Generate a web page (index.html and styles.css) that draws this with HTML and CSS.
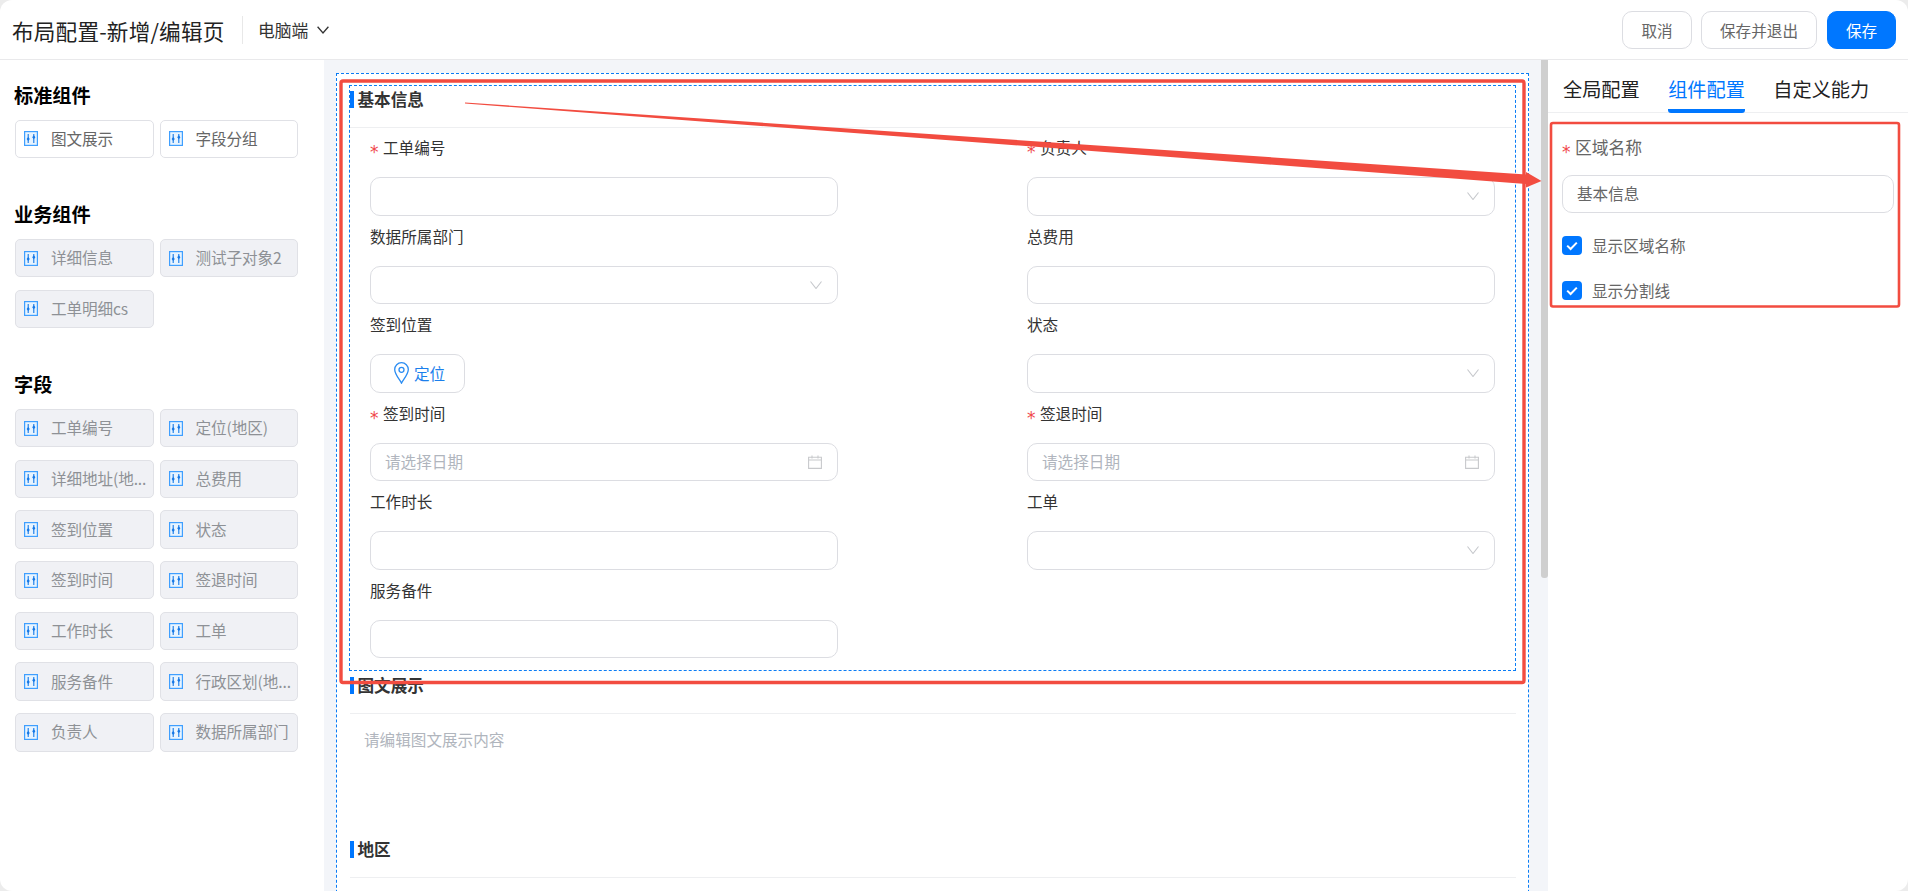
FILE: index.html
```html
<!DOCTYPE html>
<html lang="zh-CN">
<head>
<meta charset="utf-8">
<title>布局配置-新增/编辑页</title>
<link rel="stylesheet" href="styles.css">
</head>
<body>
<svg class="defs" width="0" height="0" aria-hidden="true">
  <symbol id="i-slider" viewBox="0 0 14 15">
    <rect x=".6" y=".6" width="12.8" height="13.8" fill="#e8f4ff" stroke="#3f9fff" stroke-width="1.2"/>
    <path d="M4.2 3v9M9.8 3v9" stroke="#1578e6" stroke-width="1.1" fill="none"/>
    <path d="M4.2 6l1.6 2-1.6 2-1.6-2zM9.8 4.2l1.6 2-1.6 2-1.6-2z" fill="#1578e6"/>
  </symbol>
  <symbol id="i-chev" viewBox="0 0 12 8">
    <path d="M.5.5 6 7.5 11.5.5" fill="none" stroke="#c6c8cc" stroke-width="1.1"/>
  </symbol>
  <symbol id="i-cal" viewBox="0 0 14 14">
    <path d="M.6 2.2h12.8v11.2H.6zM.6 5h12.8M4 .4v3M10 .4v3" fill="none" stroke="#c8c9cc" stroke-width="1.1"/>
  </symbol>
  <symbol id="i-check" viewBox="0 0 20 19">
    <rect width="20" height="19" rx="4" fill="#0077ff"/>
    <path d="M5.2 9.6 8.6 13l6.2-6.4" fill="none" stroke="#fff" stroke-width="2"/>
  </symbol>
</svg>

<div class="app">
  <header class="topbar">
    <h1 class="page-title">布局配置-新增/编辑页</h1>
    <div class="device">
      <span>电脑端</span>
      <svg class="device-chev" viewBox="0 0 12 8"><path d="M.6.8 6 7 11.4.8" fill="none" stroke="#333" stroke-width="1.3"/></svg>
    </div>
    <div class="actions">
      <button class="btn btn-cancel">取消</button>
      <button class="btn btn-exit">保存并退出</button>
      <button class="btn btn-primary">保存</button>
    </div>
  </header>

  <div class="main">
    <aside class="palette">
      <section class="group">
        <h2 class="group-title">标准组件</h2>
        <div class="items">
          <div class="item item-free"><svg class="item-icon"><use href="#i-slider"/></svg><span class="item-text">图文展示</span></div>
          <div class="item item-free"><svg class="item-icon"><use href="#i-slider"/></svg><span class="item-text">字段分组</span></div>
        </div>
      </section>
      <section class="group">
        <h2 class="group-title">业务组件</h2>
        <div class="items">
          <div class="item"><svg class="item-icon"><use href="#i-slider"/></svg><span class="item-text">详细信息</span></div>
          <div class="item"><svg class="item-icon"><use href="#i-slider"/></svg><span class="item-text">测试子对象2</span></div>
          <div class="item"><svg class="item-icon"><use href="#i-slider"/></svg><span class="item-text">工单明细cs</span></div>
        </div>
      </section>
      <section class="group">
        <h2 class="group-title">字段</h2>
        <div class="items">
          <div class="item"><svg class="item-icon"><use href="#i-slider"/></svg><span class="item-text">工单编号</span></div>
          <div class="item"><svg class="item-icon"><use href="#i-slider"/></svg><span class="item-text">定位(地区)</span></div>
          <div class="item"><svg class="item-icon"><use href="#i-slider"/></svg><span class="item-text">详细地址(地...</span></div>
          <div class="item"><svg class="item-icon"><use href="#i-slider"/></svg><span class="item-text">总费用</span></div>
          <div class="item"><svg class="item-icon"><use href="#i-slider"/></svg><span class="item-text">签到位置</span></div>
          <div class="item"><svg class="item-icon"><use href="#i-slider"/></svg><span class="item-text">状态</span></div>
          <div class="item"><svg class="item-icon"><use href="#i-slider"/></svg><span class="item-text">签到时间</span></div>
          <div class="item"><svg class="item-icon"><use href="#i-slider"/></svg><span class="item-text">签退时间</span></div>
          <div class="item"><svg class="item-icon"><use href="#i-slider"/></svg><span class="item-text">工作时长</span></div>
          <div class="item"><svg class="item-icon"><use href="#i-slider"/></svg><span class="item-text">工单</span></div>
          <div class="item"><svg class="item-icon"><use href="#i-slider"/></svg><span class="item-text">服务备件</span></div>
          <div class="item"><svg class="item-icon"><use href="#i-slider"/></svg><span class="item-text">行政区划(地...</span></div>
          <div class="item"><svg class="item-icon"><use href="#i-slider"/></svg><span class="item-text">负责人</span></div>
          <div class="item"><svg class="item-icon"><use href="#i-slider"/></svg><span class="item-text">数据所属部门</span></div>
        </div>
      </section>
    </aside>

    <main class="canvas">
      <div class="canvas-scroll">
        <div class="board">
          <section class="block block-selected">
            <div class="block-head"><span class="block-title">基本信息</span></div>
            <div class="fields">
              <div class="field"><div class="field-label"><i class="req">*</i>工单编号</div><div class="control"></div></div>
              <div class="field"><div class="field-label"><i class="req">*</i>负责人</div><div class="control"><svg class="chev"><use href="#i-chev"/></svg></div></div>
              <div class="field"><div class="field-label">数据所属部门</div><div class="control"><svg class="chev"><use href="#i-chev"/></svg></div></div>
              <div class="field"><div class="field-label">总费用</div><div class="control"></div></div>
              <div class="field"><div class="field-label">签到位置</div>
                <div class="locate">
                  <svg class="pin" viewBox="0 0 15 22"><path d="M7.5.7C3.7.7.7 3.7.7 7.5c0 4.6 4.6 9.6 6.8 13.6 2.2-4 6.8-9 6.8-13.6C14.3 3.7 11.3.7 7.5.7z" fill="none" stroke="#2b8df2" stroke-width="1.3"/><circle cx="7.5" cy="7.8" r="2.5" fill="none" stroke="#2b8df2" stroke-width="1.3"/></svg>
                  <span>定位</span>
                </div>
              </div>
              <div class="field"><div class="field-label">状态</div><div class="control"><svg class="chev"><use href="#i-chev"/></svg></div></div>
              <div class="field"><div class="field-label"><i class="req">*</i>签到时间</div><div class="control"><span class="ph">请选择日期</span><svg class="cal"><use href="#i-cal"/></svg></div></div>
              <div class="field"><div class="field-label"><i class="req">*</i>签退时间</div><div class="control"><span class="ph">请选择日期</span><svg class="cal"><use href="#i-cal"/></svg></div></div>
              <div class="field"><div class="field-label">工作时长</div><div class="control"></div></div>
              <div class="field"><div class="field-label">工单</div><div class="control"><svg class="chev"><use href="#i-chev"/></svg></div></div>
              <div class="field"><div class="field-label">服务备件</div><div class="control"></div></div>
            </div>
          </section>
          <section class="block">
            <div class="block-head"><span class="block-title">图文展示</span></div>
            <div class="rich">请编辑图文展示内容</div>
          </section>
          <section class="block">
            <div class="block-head"><span class="block-title">地区</span></div>
          </section>
        </div>
      </div>
      <div class="scrollbar"><div class="thumb"></div></div>
    </main>

    <aside class="config">
      <nav class="tabs">
        <span class="tab">全局配置</span>
        <span class="tab tab-active">组件配置</span>
        <span class="tab">自定义能力</span>
      </nav>
      <div class="config-body">
        <div class="config-label"><i class="req">*</i>区域名称</div>
        <div class="config-input">基本信息</div>
        <label class="check"><svg class="check-box"><use href="#i-check"/></svg>显示区域名称</label>
        <label class="check"><svg class="check-box"><use href="#i-check"/></svg>显示分割线</label>
      </div>
    </aside>
  </div>

  <svg class="marks" viewBox="0 0 1908 891" aria-hidden="true">
    <rect class="mark-box" x="341" y="81" width="1183" height="601.5" rx="2"/>
    <rect class="mark-box-thin" x="1551" y="123" width="348" height="183.5" rx="2"/>
    <polygon class="mark-arrow" points="465,102.5 1526,174.5 1526,172 1541.5,181 1526,187.5 1526,184 465,103.5"/>
  </svg>
</div>
</body>
</html>
```
FILE: styles.css
```css
* { box-sizing: border-box; }
html, body { margin: 0; height: 100%; overflow: hidden; background: #ececec; }
body { font-family: "Noto Sans CJK SC", "Noto Sans", sans-serif; font-size: 15.6px; color: #333; }
.defs { position: absolute; }
.app { position: relative; width: 1908px; height: 891px; display: flex; flex-direction: column; background: #fff; border-radius: 12px; overflow: hidden; }

.topbar { height: 60px; flex: none; display: flex; align-items: center; padding: 0 12px; border-bottom: 1px solid #e9e9eb; }
.page-title { margin: 0; font-size: 21.6px; font-weight: 400; color: #222; line-height: 30px; width: 231px; height: 28px; border-right: 1px solid #e8e8e8; white-space: nowrap; letter-spacing: .2px; }
.device { display: flex; align-items: center; margin-left: 15px; font-size: 16.8px; color: #333; }
.device-chev { width: 12px; height: 8px; margin-left: 9px; }
.actions { margin-left: auto; display: flex; }
.btn { height: 38px; border: 1px solid #dcdde2; border-radius: 10px; background: #fff; color: #666; font: inherit; padding: 0; }
.btn-cancel { width: 70px; margin-right: 9px; }
.btn-exit { width: 116px; margin-right: 10px; }
.btn-primary { width: 69px; background: #0077ff; border-color: #0077ff; color: #fff; }

.main { flex: 1; display: flex; min-height: 0; }

.palette { width: 324px; flex: none; padding: 23px 0 0 15px; }
.group { margin-bottom: 44.4px; }
.group-title { margin: 0 0 12.6px -1px; font-size: 19.2px; font-weight: 700; line-height: 24px; color: #000; }
.items { display: grid; grid-template-columns: 138.6px 138.6px; gap: 12.3px 6px; }
.item { height: 38.4px; display: flex; align-items: center; padding-left: 8px; border: 1px solid #e0e1e6; border-radius: 5px; background: #f0f1f5; color: #8e9196; }
.item-free { background: #fff; color: #666; }
.item-icon { width: 14px; height: 15px; flex: none; margin-right: 13px; }
.item-text { padding-bottom: 2px; white-space: nowrap; letter-spacing: -.1px; }

.canvas { flex: 1; min-width: 0; display: flex; background: #f3f5f9; }
.canvas-scroll { flex: 1; min-width: 0; overflow: hidden; padding: 13px 12px 0; }
.scrollbar { width: 7px; flex: none; }
.thumb { height: 518px; background: #cfcfcf; border-radius: 0 0 3px 3px; }
.board { height: 900px; background: #fff; border: 1px dashed #0a7cf5; padding: 11px 12px 0 13px; }

.block-selected { border: 1px dashed #0a7cf5; margin: 0 0 6px -1px; padding: 5px 0 12px; }
.block-head { padding-bottom: 19px; border-bottom: 1px solid #eeeff1; }
.block-title { display: block; height: 17px; line-height: 17px; padding-left: 3.5px; border-left: 4px solid #0077ff; font-size: 16.6px; font-weight: 700; color: #333; }
.rich { height: 127px; padding: 12px 0 0 14px; line-height: 26px; color: #b0b5bd; }

.fields { display: grid; grid-template-columns: 657px 468px; row-gap: 1px; padding-left: 20px; }
.field { width: 468px; }
.field-label { height: 49px; line-height: 38px; color: #333; white-space: nowrap; }
.req { font-family: "DejaVu Sans", sans-serif; font-style: normal; font-size: 17px; line-height: 1; vertical-align: -4px; color: #f0474a; display: inline-block; width: 13px; }
.control { position: relative; height: 38.5px; display: flex; align-items: center; padding: 0 15px 0 14px; border: 1px solid #dcdde2; border-radius: 10px; background: #fff; }
.chev { width: 12px; height: 8px; margin-left: auto; }
.cal { width: 14px; height: 14px; margin-left: auto; }
.ph { color: #b0b5bd; padding-bottom: 2px; }
.locate { width: 95px; height: 38.5px; display: flex; align-items: center; gap: 5px; padding-left: 23px; border: 1px solid #dcdde2; border-radius: 10px; color: #1b7fec; }
.pin { width: 15px; height: 22px; }

.config { width: 360px; flex: none; }
.tabs { height: 53px; display: flex; gap: 28.4px; padding-left: 15px; border-bottom: 1px solid #eeeff1; font-size: 19.2px; color: #222; }
.tab { height: 53px; line-height: 58px; white-space: nowrap; }
.tab-active { color: #0077ff; border-bottom: 4px solid #0077ff; border-radius: 0 0 3px 3px; }
.config-body { padding: 0 14px; }
.config-label { height: 62px; padding-top: 20px; line-height: 28px; font-size: 16.8px; color: #666; }
.config-input { width: 332px; height: 38px; line-height: 34px; padding-left: 14px; border: 1px solid #dcdde2; border-radius: 10px; color: #666; margin-bottom: 23px; }
.check { display: flex; align-items: center; height: 19px; margin-bottom: 26px; line-height: 17px; color: #666; white-space: nowrap; }
.check-box { width: 20px; height: 19px; margin-right: 10px; flex: none; }

.marks { position: absolute; left: 0; top: 0; width: 1908px; height: 891px; pointer-events: none; }
.mark-box { fill: none; stroke: #f24c40; stroke-width: 3.4; }
.mark-box-thin { fill: none; stroke: #f24c40; stroke-width: 2.6; }
.mark-arrow { fill: #f24c40; }
```
